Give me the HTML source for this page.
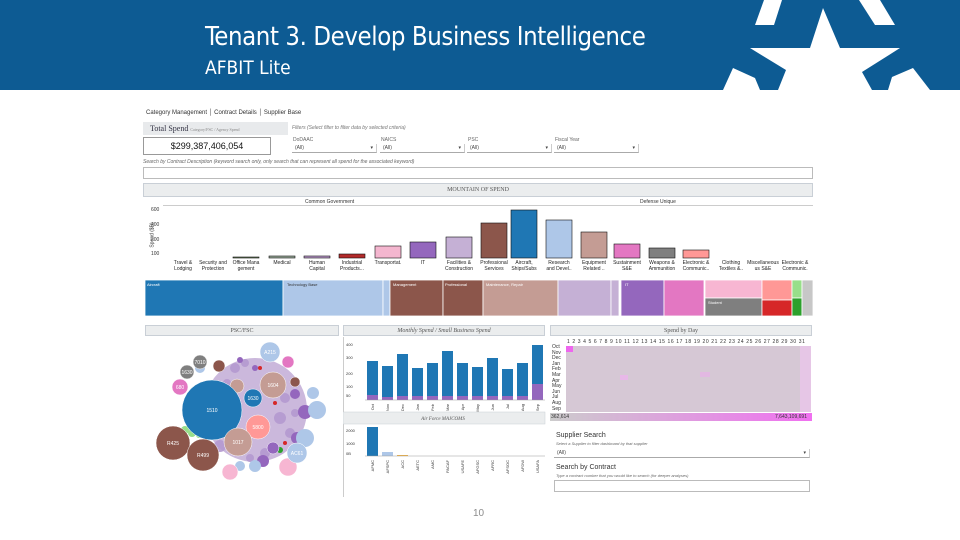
<!DOCTYPE html>
<html><head><meta charset="utf-8"><style>
*{margin:0;padding:0;box-sizing:border-box}
body{width:960px;height:540px;background:#fff;position:relative;overflow:hidden;font-family:"Liberation Sans",sans-serif}
.a{position:absolute}
.hdr{background:#ebedee;border:1px solid #c9cfd6;font-size:6px;color:#555;text-align:center;font-family:"Liberation Serif",serif;line-height:10px}
.t{font-size:5px;color:#333;position:absolute;white-space:nowrap}
.dd{position:absolute;height:9px;border-bottom:1px solid #aaa;border-right:1px solid #ccc;font-size:5px;color:#444;padding-left:3px;line-height:9px}
</style></head><body>
<div class="a" style="left:0;top:0;width:960px;height:90px;background:#0d5b93"></div>
<svg class="a" style="left:0;top:0" width="960" height="90">
<polygon fill="#fff" points="764,0 782,0 774,25 755,25"/>
<polygon fill="#fff" points="859,0 880,0 895,25 875,25"/>
<polygon fill="#fff" points="823,8 840,48 900,48 862,72 872,90 778,90 786,70 750,48 810,48"/>
<polygon fill="#fff" points="733,68 755,78 760,90 723,90"/>
<polygon fill="#fff" points="892,77 913,68 930,90 888,90"/>
</svg>
<div class="a" style="left:205px;top:22px;color:#fff;font-size:25.5px;font-family:'DejaVu Sans Condensed','Liberation Sans Narrow',sans-serif;letter-spacing:-0.4px">Tenant 3. Develop Business Intelligence</div>
<div class="a" style="left:205px;top:57px;color:#fff;font-size:19px;font-family:'DejaVu Sans Condensed','Liberation Sans Narrow',sans-serif">AFBIT Lite</div>

<div class="t" style="left:146px;top:110px;font-size:6px">Category Management │ Contract Details │ Supplier Base</div>
<div class="a" style="left:143px;top:122px;width:145px;height:13px;background:#e8eaec"></div>
<div class="t" style="left:150px;top:124px;font-size:8px;font-family:'Liberation Serif',serif;color:#334">Total Spend <span style="font-size:4px;color:#888">Category/FSC / Agency Spend</span></div>
<div class="a" style="left:143px;top:137px;width:128px;height:18px;border:1px solid #999;font-size:9px;text-align:center;line-height:16px;color:#111">$299,387,406,054</div>
<div class="t" style="left:292px;top:125px;color:#777;font-style:italic">Filters (Select filter to filter data by selected criteria)</div>
<div class="t" style="left:293px;top:137px;color:#666">DoDAAC</div><div class="dd" style="left:292px;top:144px;width:85px">(All) <span style="float:right;margin-right:3px">▾</span></div>
<div class="t" style="left:381px;top:137px;color:#666">NAICS</div><div class="dd" style="left:380px;top:144px;width:85px">(All) <span style="float:right;margin-right:3px">▾</span></div>
<div class="t" style="left:468px;top:137px;color:#666">PSC</div><div class="dd" style="left:467px;top:144px;width:85px">(All) <span style="float:right;margin-right:3px">▾</span></div>
<div class="t" style="left:555px;top:137px;color:#666">Fiscal Year</div><div class="dd" style="left:554px;top:144px;width:85px">(All) <span style="float:right;margin-right:3px">▾</span></div>
<div class="t" style="left:143px;top:159px;color:#666;font-style:italic">Search by Contract Description (keyword search only, only search that can represent all spend for the associated keyword)</div>
<div class="a" style="left:143px;top:167px;width:670px;height:12px;border:1px solid #bbb"></div>
<div class="a hdr" style="left:143px;top:183px;width:670px;height:14px;line-height:13px">MOUNTAIN OF SPEND</div>
<div class="t" style="left:305px;top:199px">Common Government</div>
<div class="t" style="left:640px;top:199px">Defense Unique</div>
<div class="a" style="left:163px;top:205px;width:650px;border-top:1px solid #ccc"></div>
<div class="t" style="left:151px;top:207px">600</div><div class="t" style="left:151px;top:222px">400</div><div class="t" style="left:151px;top:237px">200</div><div class="t" style="left:151px;top:251px">100</div>
<div class="t" style="left:140px;top:232px;transform:rotate(-90deg)">Spend ($B)</div>
<svg class="a" style="left:163px;top:200px" width="652" height="78">
<g stroke="#111" stroke-width="0.6">
<rect x="70" y="57" width="26" height="1" fill="#7a9a6a"/>
<rect x="106" y="56" width="26" height="2" fill="#9a9"/>
<rect x="141" y="56" width="26" height="2" fill="#b9c"/>
<rect x="176" y="54" width="26" height="4" fill="#b22a2a"/>
<rect x="212" y="46" width="26" height="12" fill="#f4b6cf"/>
<rect x="247" y="42" width="26" height="16" fill="#9467bd"/>
<rect x="283" y="37" width="26" height="21" fill="#c5b0d5"/>
<rect x="318" y="23" width="26" height="35" fill="#8c564b"/>
<rect x="348" y="10" width="26" height="48" fill="#1f77b4"/>
<rect x="383" y="20" width="26" height="38" fill="#aec7e8"/>
<rect x="418" y="32" width="26" height="26" fill="#c49c94"/>
<rect x="451" y="44" width="26" height="14" fill="#e377c2"/>
<rect x="486" y="48" width="26" height="10" fill="#7f7f7f"/>
<rect x="520" y="50" width="26" height="8" fill="#ff9896"/>
</g>
<g font-size="5" fill="#222" text-anchor="middle" font-family="Liberation Sans">
<text x="20" y="64">Travel &amp;</text><text x="20" y="70">Lodging</text>
<text x="50" y="64">Security and</text><text x="50" y="70">Protection</text>
<text x="83" y="64">Office Mana</text><text x="83" y="70">gement</text>
<text x="119" y="64">Medical</text>
<text x="154" y="64">Human</text><text x="154" y="70">Capital</text>
<text x="189" y="64">Industrial</text><text x="189" y="70">Products...</text>
<text x="225" y="64">Transportat.</text>
<text x="260" y="64">IT</text>
<text x="296" y="64">Facilities &amp;</text><text x="296" y="70">Construction</text>
<text x="331" y="64">Professional</text><text x="331" y="70">Services</text>
<text x="361" y="64">Aircraft,</text><text x="361" y="70">Ships/Subs</text>
<text x="396" y="64">Research</text><text x="396" y="70">and Devel..</text>
<text x="431" y="64">Equipment</text><text x="431" y="70">Related ..</text>
<text x="464" y="64">Sustainment</text><text x="464" y="70">S&amp;E</text>
<text x="499" y="64">Weapons &amp;</text><text x="499" y="70">Ammunition</text>
<text x="533" y="64">Electronic &amp;</text><text x="533" y="70">Communic..</text>
<text x="568" y="64">Clothing</text><text x="568" y="70">Textiles &amp;..</text>
<text x="600" y="64">Miscellaneous</text><text x="600" y="70">us S&amp;E</text>
<text x="632" y="64">Electronic &amp;</text><text x="632" y="70">Communic.</text>
</g></svg>
<svg class="a" style="left:145px;top:280px" width="668" height="37">
<g stroke="#fff" stroke-width="0.8">
<rect x="0" y="0" width="138" height="36" fill="#1f77b4"/>
<rect x="138" y="0" width="100" height="36" fill="#aec7e8"/>
<rect x="238" y="0" width="7" height="36" fill="#aec7e8"/>
<rect x="245" y="0" width="53" height="36" fill="#8c564b"/>
<rect x="298" y="0" width="40" height="36" fill="#8c564b"/>
<rect x="338" y="0" width="75" height="36" fill="#c49c94"/>
<rect x="413" y="0" width="53" height="36" fill="#c5b0d5"/>
<rect x="466" y="0" width="8" height="36" fill="#c5b0d5"/>
<rect x="476" y="0" width="43" height="36" fill="#9467bd"/>
<rect x="519" y="0" width="40" height="36" fill="#e377c2"/>
<rect x="560" y="0" width="57" height="18" fill="#f7b6d2"/>
<rect x="560" y="18" width="57" height="18" fill="#7f7f7f"/>
<rect x="617" y="0" width="30" height="20" fill="#ff9896"/>
<rect x="617" y="20" width="30" height="16" fill="#d62728"/>
<rect x="647" y="0" width="10" height="18" fill="#98df8a"/>
<rect x="647" y="18" width="10" height="18" fill="#2ca02c"/>
<rect x="657" y="0" width="11" height="36" fill="#c7c7c7"/>
</g>
<g font-size="4" fill="#fff" font-family="Liberation Sans"><text x="2" y="6">Aircraft</text><text x="142" y="6" fill="#333">Technology Base</text><text x="248" y="6">Management</text><text x="300" y="6">Professional</text><text x="341" y="6">Maintenance, Repair</text><text x="480" y="6">IT</text><text x="563" y="24">Student</text></g>
</svg>
<div class="a hdr" style="left:145px;top:325px;width:194px;height:11px">PSC/FSC</div>
<div class="a hdr" style="left:343px;top:325px;width:202px;height:11px;font-style:italic">Monthly Spend / Small Business Spend</div>
<div class="a hdr" style="left:550px;top:325px;width:262px;height:11px">Spend by Day</div>
<svg class="a" style="left:145px;top:338px" width="195" height="150">
<circle cx="110" cy="72" r="52" fill="#cbb8dc"/>
<g fill="#b49ad0" opacity="0.9">
<circle cx="90" cy="30" r="5"/><circle cx="100" cy="25" r="4"/><circle cx="140" cy="60" r="5"/><circle cx="135" cy="80" r="6"/><circle cx="145" cy="95" r="5"/><circle cx="120" cy="115" r="5"/><circle cx="105" cy="120" r="4"/><circle cx="75" cy="108" r="6"/><circle cx="150" cy="75" r="4"/><circle cx="82" cy="45" r="4"/>
</g>
<g fill="#9467bd"><circle cx="160" cy="74" r="7"/><circle cx="152" cy="100" r="6"/><circle cx="118" cy="123" r="6"/><circle cx="150" cy="56" r="5"/><circle cx="95" cy="22" r="3"/><circle cx="110" cy="30" r="3"/></g>
<g fill="#aec7e8"><circle cx="172" cy="72" r="9"/><circle cx="160" cy="100" r="9"/><circle cx="168" cy="55" r="6"/><circle cx="110" cy="128" r="6"/><circle cx="95" cy="128" r="5"/><circle cx="55" cy="30" r="5"/></g>
<g fill="#d62728"><circle cx="130" cy="65" r="2"/><circle cx="140" cy="105" r="2"/><circle cx="115" cy="30" r="2"/></g>
<circle cx="135" cy="112" r="3" fill="#2ca02c"/>
<g fill="#98df8a"><circle cx="40" cy="92" r="4"/><circle cx="47" cy="95" r="4"/><circle cx="54" cy="97" r="3"/></g>
<g stroke="#fff" stroke-width="0.5">
<circle cx="125" cy="14" r="10" fill="#aec7e8"/>
<circle cx="143" cy="24" r="6" fill="#e377c2"/>
<circle cx="150" cy="44" r="5" fill="#8c564b"/>
<circle cx="55" cy="24" r="7" fill="#7f7f7f"/>
<circle cx="42" cy="34" r="7" fill="#7f7f7f"/>
<circle cx="35" cy="49" r="8" fill="#e377c2"/>
<circle cx="74" cy="28" r="6" fill="#8c564b"/>
<circle cx="92" cy="48" r="7" fill="#c49c94"/>
<circle cx="128" cy="47" r="13" fill="#c49c94"/>
<circle cx="113" cy="89" r="12" fill="#ff9896"/>
<circle cx="108" cy="60" r="9" fill="#1f77b4"/>
<circle cx="67" cy="72" r="30" fill="#1f77b4"/>
<circle cx="93" cy="104" r="14" fill="#c49c94"/>
<circle cx="28" cy="105" r="17" fill="#8c564b"/>
<circle cx="58" cy="117" r="16" fill="#8c564b"/>
<circle cx="85" cy="134" r="8" fill="#f7b6d2"/>
<circle cx="143" cy="129" r="9" fill="#f7b6d2"/>
<circle cx="152" cy="115" r="10" fill="#aec7e8"/>
<circle cx="128" cy="110" r="6" fill="#9467bd"/>
</g>
<g font-size="5" fill="#fff" text-anchor="middle" font-family="Liberation Sans"><text x="67" y="74">1510</text><text x="128" y="49">1604</text><text x="108" y="62">1630</text><text x="93" y="106">1017</text><text x="113" y="91">5800</text><text x="28" y="107">R425</text><text x="58" y="119">R499</text><text x="35" y="51">680</text><text x="42" y="36">1630</text><text x="55" y="26">7010</text><text x="125" y="16">A215</text><text x="152" y="117">AC61</text></g>
</svg>
<div class="a" style="left:343px;top:337px;width:1px;height:160px;background:#ccc"></div>
<svg class="a" style="left:343px;top:338px" width="203" height="160">
<g font-size="4" fill="#333" font-family="Liberation Sans"><text x="3" y="8">400</text><text x="3" y="21">300</text><text x="3" y="37">200</text><text x="3" y="50">100</text><text x="3" y="59">50</text>
<text x="3" y="94">2000</text><text x="3" y="107">1000</text><text x="3" y="117">0B</text></g>
<g fill="#1f77b4">
<rect x="24" y="23" width="11" height="39"/><rect x="39" y="28" width="11" height="34"/><rect x="54" y="16" width="11" height="46"/><rect x="69" y="30" width="11" height="32"/><rect x="84" y="25" width="11" height="37"/><rect x="99" y="13" width="11" height="49"/><rect x="114" y="25" width="11" height="37"/><rect x="129" y="29" width="11" height="33"/><rect x="144" y="20" width="11" height="42"/><rect x="159" y="31" width="11" height="31"/><rect x="174" y="25" width="11" height="37"/><rect x="189" y="7" width="11" height="55"/>
</g>
<g fill="#9467bd"><rect x="24" y="57" width="11" height="5"/><rect x="39" y="59" width="11" height="3"/><rect x="54" y="58" width="11" height="4"/><rect x="69" y="58" width="11" height="4"/><rect x="84" y="58" width="11" height="4"/><rect x="99" y="58" width="11" height="4"/><rect x="114" y="58" width="11" height="4"/><rect x="129" y="58" width="11" height="4"/><rect x="144" y="58" width="11" height="4"/><rect x="159" y="58" width="11" height="4"/><rect x="174" y="58" width="11" height="4"/><rect x="189" y="46" width="11" height="16"/></g>
<line x1="22" y1="62" x2="202" y2="62" stroke="#999" stroke-width="0.5"/>
<rect x="0" y="74" width="202" height="12" fill="#ebedee" stroke="#c9cfd6" stroke-width="0.5"/>
<text x="100" y="82" font-size="5" fill="#555" text-anchor="middle" font-family="Liberation Serif" font-style="italic">Air Force MAJCOMS</text>
<rect x="24" y="89" width="11" height="29" fill="#1f77b4"/><rect x="39" y="114" width="11" height="4" fill="#aec7e8"/><rect x="54" y="117" width="11" height="1" fill="#f0b040"/>
<line x1="22" y1="118" x2="202" y2="118" stroke="#999" stroke-width="0.5"/>
<g font-size="4" fill="#333" font-family="Liberation Sans">
<text transform="translate(31,66) rotate(-90)" text-anchor="end">Oct</text><text transform="translate(46,66) rotate(-90)" text-anchor="end">Nov</text><text transform="translate(61,66) rotate(-90)" text-anchor="end">Dec</text><text transform="translate(76,66) rotate(-90)" text-anchor="end">Jan</text><text transform="translate(91,66) rotate(-90)" text-anchor="end">Feb</text><text transform="translate(106,66) rotate(-90)" text-anchor="end">Mar</text><text transform="translate(121,66) rotate(-90)" text-anchor="end">Apr</text><text transform="translate(136,66) rotate(-90)" text-anchor="end">May</text><text transform="translate(151,66) rotate(-90)" text-anchor="end">Jun</text><text transform="translate(166,66) rotate(-90)" text-anchor="end">Jul</text><text transform="translate(181,66) rotate(-90)" text-anchor="end">Aug</text><text transform="translate(196,66) rotate(-90)" text-anchor="end">Sep</text>
<text transform="translate(31,122) rotate(-90)" text-anchor="end">AFMC</text><text transform="translate(46,122) rotate(-90)" text-anchor="end">AFSPC</text><text transform="translate(61,122) rotate(-90)" text-anchor="end">ACC</text><text transform="translate(76,122) rotate(-90)" text-anchor="end">AETC</text><text transform="translate(91,122) rotate(-90)" text-anchor="end">AMC</text><text transform="translate(106,122) rotate(-90)" text-anchor="end">PACAF</text><text transform="translate(121,122) rotate(-90)" text-anchor="end">USAFE</text><text transform="translate(136,122) rotate(-90)" text-anchor="end">AFGSC</text><text transform="translate(151,122) rotate(-90)" text-anchor="end">AFRC</text><text transform="translate(166,122) rotate(-90)" text-anchor="end">AFSOC</text><text transform="translate(181,122) rotate(-90)" text-anchor="end">AFDW</text><text transform="translate(196,122) rotate(-90)" text-anchor="end">USAFA</text>
</g></svg>
<div class="t" style="left:567px;top:339px;font-size:5px;letter-spacing:0.6px">1 2 3 4 5 6 7 8 9 10 11 12 13 14 15 16 17 18 19 20 21 22 23 24 25 26 27 28 29 30 31</div>
<div class="t" style="left:552px;top:345px;font-size:5px;line-height:5.6px">Oct<br>Nov<br>Dec<br>Jan<br>Feb<br>Mar<br>Apr<br>May<br>Jun<br>Jul<br>Aug<br>Sep</div>
<div class="a" style="left:566px;top:346px;width:245px;height:66px;background:#d6c8d5"></div>
<div class="a" style="left:566px;top:346px;width:7px;height:6px;background:#ee66ee"></div>
<div class="a" style="left:800px;top:346px;width:11px;height:66px;background:#e6c6e6"></div>
<div class="a" style="left:620px;top:375px;width:8px;height:5px;background:#e8b8e8"></div>
<div class="a" style="left:700px;top:372px;width:10px;height:5px;background:#e2b8e2"></div>
<div class="a" style="left:550px;top:413px;width:262px;height:8px;background:linear-gradient(90deg,#ccc,#f070f0)"></div>
<div class="t" style="left:551px;top:414px;font-size:5px">362,614</div>
<div class="t" style="left:775px;top:414px;font-size:5px">7,643,109,691</div>
<div class="t" style="left:556px;top:432px;font-size:7px">Supplier Search</div>
<div class="t" style="left:556px;top:441px;font-size:4px;font-style:italic;color:#666">Select a Supplier to filter dashboard by that supplier</div>
<div class="dd" style="left:554px;top:449px;width:256px">(All)<span style="float:right;margin-right:3px">▾</span></div>
<div class="t" style="left:556px;top:464px;font-size:7px">Search by Contract</div>
<div class="t" style="left:556px;top:473px;font-size:4px;font-style:italic;color:#666">Type a contract number that you would like to search (for deeper analyses)</div>
<div class="a" style="left:554px;top:480px;width:256px;height:12px;border:1px solid #bbb"></div>
<div class="t" style="left:473px;top:508px;font-size:10px;color:#8c8c8c">10</div>
</body></html>
